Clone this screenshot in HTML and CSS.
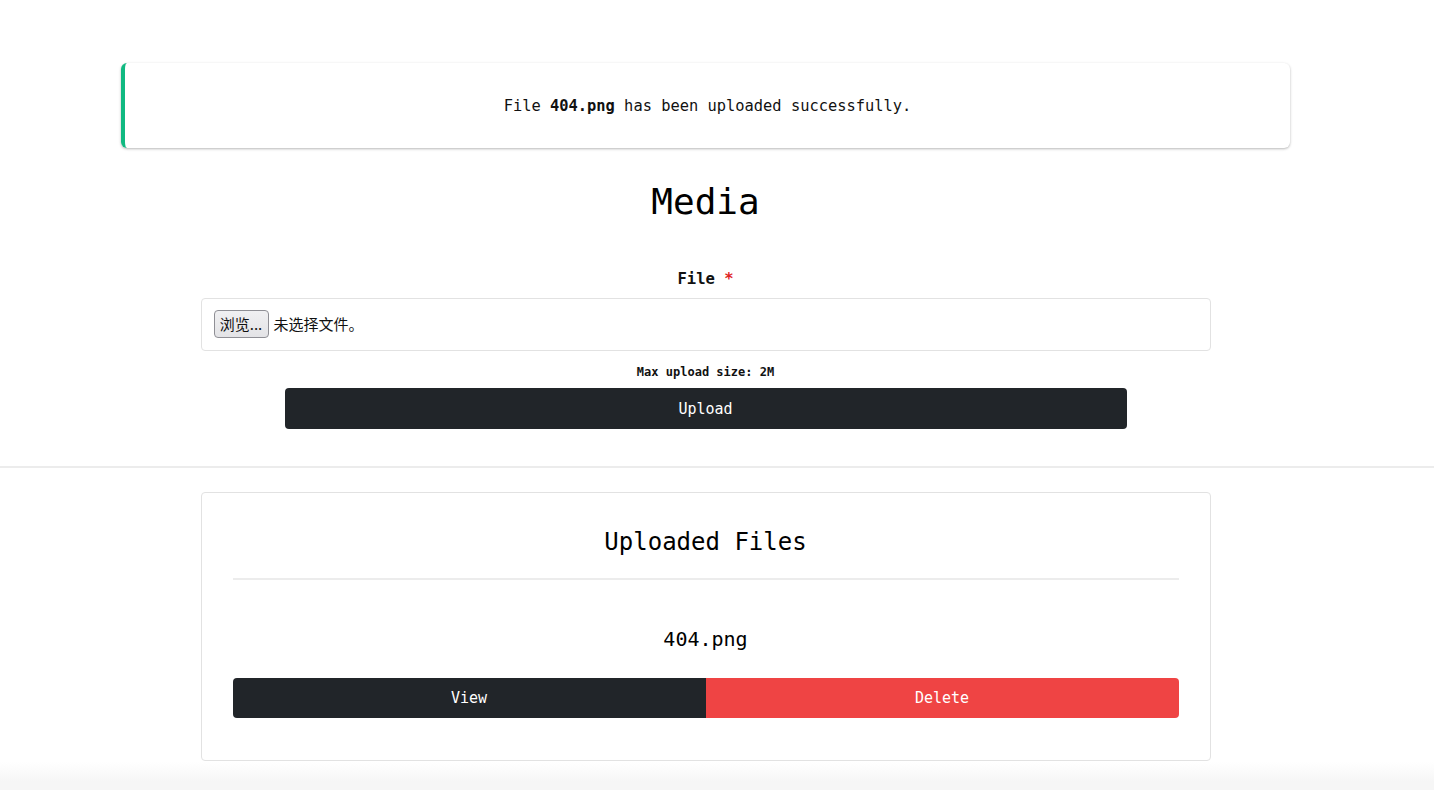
FILE: index.html
```html
<!DOCTYPE html>
<html lang="zh-CN">
<head>
<meta charset="utf-8">
<title>Media</title>
<link rel="stylesheet" href="styles.css">
</head>
<body>
<div class="wrap">
  <div class="alert"><p class="alert-text">File <strong>404.png</strong> has been uploaded successfully.</p></div>
  <h1 class="title">Media</h1>
  <form class="upload-form">
    <label class="label">File <span class="req">*</span></label>
    <div class="file-box">
      <span class="browse">浏览...</span>
      <span class="nofile">未选择文件。</span>
    </div>
    <p class="hint">Max upload size: 2M</p>
    <button type="button" class="btn btn-dark btn-upload">Upload</button>
  </form>
</div>
<hr class="sep">
<div class="wrap">
  <section class="card">
    <h2 class="card-title">Uploaded Files</h2>
    <div class="card-rule"></div>
    <p class="fname">404.png</p>
    <div class="actions">
      <button type="button" class="btn btn-dark btn-left">View</button>
      <button type="button" class="btn btn-red btn-right">Delete</button>
    </div>
  </section>
</div>
<footer class="foot"></footer>
</body>
</html>
```

FILE: styles.css
```css
html, body {
  margin: 0;
  padding: 0;
  background: #ffffff;
}
body {
  font-family: "DejaVu Sans Mono", "Liberation Mono", monospace;
  color: #111;
  overflow: hidden;
  height: 790px;
  position: relative;
}
.wrap {
  width: 1411px;
  display: flex;
  flex-direction: column;
  align-items: center;
}
.alert {
  margin-top: 63px;
  width: 1169px;
  height: 85px;
  box-sizing: border-box;
  border-left: 4px solid #10b981;
  border-radius: 6px;
  box-shadow: 0 1px 3px rgba(0,0,0,0.22), 0 1px 2px rgba(0,0,0,0.08);
  display: flex;
  align-items: center;
  justify-content: center;
}
.alert-text {
  margin: 0;
  padding-top: 1px;
  font-size: 15.4px;
  line-height: 20px;
  text-align: center;
  color: #111;
}
.alert-text strong { font-weight: bold; }
.title {
  margin: 32px 0 0;
  font-size: 36px;
  line-height: 44px;
  font-weight: normal;
  color: #000;
}
.upload-form {
  width: 1010px;
  display: flex;
  flex-direction: column;
  align-items: center;
  margin-top: 43px;
}
.label {
  font-size: 15.5px;
  line-height: 24px;
  font-weight: bold;
  color: #111;
}
.req { color: #e02424; }
.file-box {
  margin-top: 7px;
  width: 100%;
  height: 53px;
  box-sizing: border-box;
  border: 1px solid #e2e2e2;
  border-radius: 4px;
  display: flex;
  align-items: center;
  padding-left: 12px;
  padding-bottom: 2px;
  gap: 5px;
  font-family: "Noto Sans CJK SC", sans-serif;
}
.browse {
  box-sizing: border-box;
  height: 28px;
  width: 55px;
  border: 1px solid #8f8f95;
  border-radius: 4px;
  background: linear-gradient(#f0f0f2, #e3e3e6);
  font-size: 15px;
  line-height: 26px;
  text-align: center;
  color: #111;
}
.nofile {
  font-size: 15px;
  color: #111;
}
.hint {
  margin: 13px 0 0;
  font-size: 12px;
  line-height: 16px;
  font-weight: bold;
}
.btn {
  border: none;
  font-family: "DejaVu Sans Mono", monospace;
  font-size: 15px;
  color: #fff;
  cursor: pointer;
  padding: 0;
}
.btn-dark { background: #212529; }
.btn-red { background: #ef4444; }
.btn-upload {
  margin-top: 8px;
  width: 842px;
  height: 41px;
  border-radius: 4px;
}
.sep {
  margin: 37px 0 0;
  border: none;
  border-top: 2px solid #ececec;
  height: 0;
}
.card {
  margin-top: 24px;
  width: 1010px;
  height: 269px;
  box-sizing: border-box;
  border: 1px solid #e2e2e2;
  border-radius: 4px;
  padding: 33px 31px 0;
  display: flex;
  flex-direction: column;
  align-items: stretch;
}
.card-title {
  margin: 0;
  text-align: center;
  font-size: 24px;
  line-height: 32px;
  font-weight: normal;
  color: #000;
}
.card-rule {
  margin-top: 20px;
  height: 2px;
  background: #ececec;
}
.fname {
  margin: 45px 0 0;
  text-align: center;
  font-size: 20px;
  line-height: 28px;
  color: #000;
}
.actions {
  margin-top: 25px;
  display: flex;
  height: 40px;
}
.actions .btn { flex: 1; height: 40px; }
.btn-left { border-radius: 4px 0 0 4px; }
.btn-right { border-radius: 0 4px 4px 0; }
.foot {
  position: absolute;
  left: 0;
  right: 0;
  top: 762px;
  height: 40px;
  background: linear-gradient(rgba(250,250,250,0), #f6f6f6 20px);
}
```
